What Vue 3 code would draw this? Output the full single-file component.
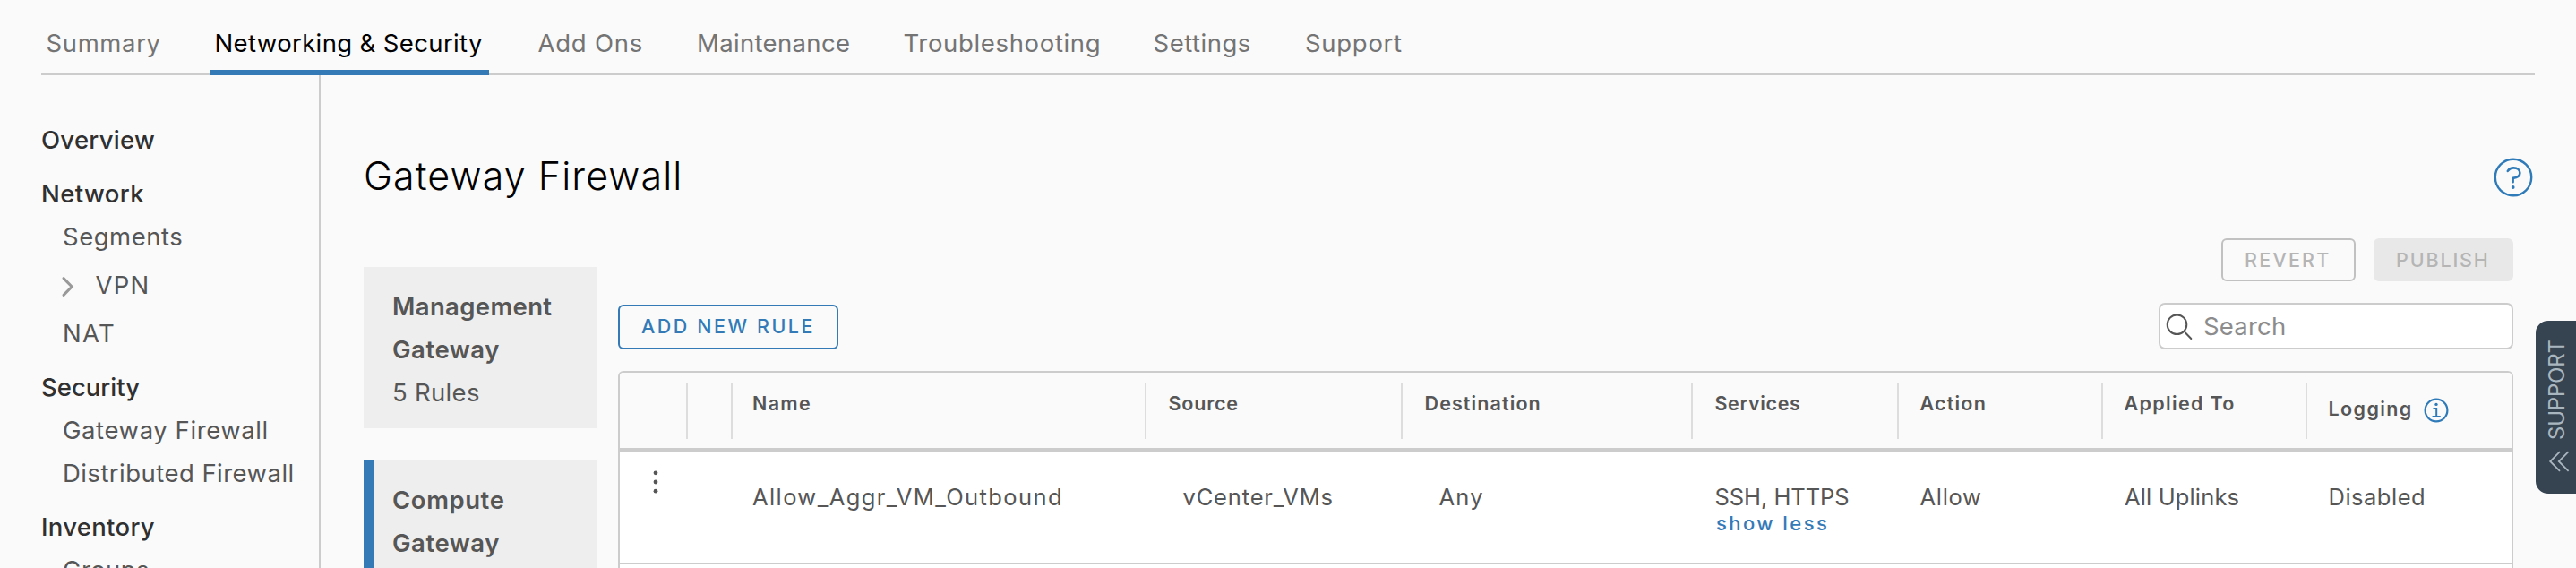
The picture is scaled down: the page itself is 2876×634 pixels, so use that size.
<script setup>
const tabs = [
  { label: 'Summary', track: 0.62 },
  { label: 'Networking & Security', track: 0.37, active: true },
  { label: 'Add Ons', track: 0.78 },
  { label: 'Maintenance', track: 0.34 },
  { label: 'Troubleshooting', track: 0.66 },
  { label: 'Settings', track: 0.5 },
  { label: 'Support', track: 0.7 },
]

const nav = [
  { label: 'Overview', track: 0.28, head: true },
  { label: 'Network', track: 0.42, head: true },
  { label: 'Segments', track: 0.5 },
  { label: 'VPN', track: 1.2, expandable: true },
  { label: 'NAT', track: 1.3 },
  { label: 'Security', track: 0, head: true },
  { label: 'Gateway Firewall', track: 0.58 },
  { label: 'Distributed Firewall', track: 0.46 },
  { label: 'Inventory', track: 0.3, head: true },
  { label: 'Groups', track: 0.4 },
]

const gateways = [
  {
    lines: [
      { text: 'Management', track: 0.36 },
      { text: 'Gateway', track: 0.52 },
    ],
    rules: '5 Rules',
  },
  {
    lines: [
      { text: 'Compute', track: 0.57 },
      { text: 'Gateway', track: 0.52 },
    ],
    active: true,
  },
]

const columns = [
  { key: 'menu' },
  { key: 'select' },
  { key: 'name', label: 'Name', track: 1.35 },
  { key: 'source', label: 'Source', track: 0.8 },
  { key: 'destination', label: 'Destination', track: 1.1 },
  { key: 'services', label: 'Services', track: 0.64 },
  { key: 'action', label: 'Action', track: 1.2 },
  { key: 'applied', label: 'Applied To', track: 1.33 },
  { key: 'logging', label: 'Logging', track: 1.4 },
]

const rule = {
  name: { text: 'Allow_Aggr_VM_Outbound', track: 1.4 },
  source: { text: 'vCenter_VMs', track: 0.83 },
  destination: { text: 'Any', track: 1.2 },
  services: { text: 'SSH, HTTPS', track: -0.06 },
  action: { text: 'Allow', track: 0.7 },
  applied: { text: 'All Uplinks', track: 0.14 },
  logging: { text: 'Disabled', track: 0.5 },
}

const tracking = (v) => ({ letterSpacing: `${v || 0}px` })
</script>

<template>
  <div class="page">
    <nav class="tabs">
      <a
        v-for="t in tabs"
        :key="t.label"
        class="tab"
        :class="{ active: t.active }"
        :style="tracking(t.track)"
      >{{ t.label }}</a>
    </nav>

    <div class="body">
      <aside class="sidebar">
        <div
          v-for="n in nav"
          :key="n.label"
          class="nav-item"
          :class="{ head: n.head, expandable: n.expandable }"
        >
          <svg v-if="n.expandable" class="caret" width="16" height="26" viewBox="0 0 16 26">
            <path d="M4 3.6 L13.2 13 L4 22.4" fill="none" stroke="#999" stroke-width="3" stroke-linecap="round" />
          </svg>
          <span :style="tracking(n.track)">{{ n.label }}</span>
        </div>
      </aside>

      <main class="main">
        <header class="title-row">
          <h1>Gateway Firewall</h1>
          <svg class="help" width="44" height="44" viewBox="0 0 44 44" fill="none" stroke="#2f7ab8">
            <circle cx="22" cy="22" r="20.2" stroke-width="2.4" />
            <path d="M15.8 14.9 C17.4 12.4 19.6 11.4 22.3 11.4 C26.4 11.4 29.4 13.6 29.4 17 C29.4 20.8 26.4 22.2 21.6 22.9 V27.2" stroke-width="2.6" stroke-linecap="round" stroke-linejoin="round" />
            <circle cx="21.7" cy="33" r="1.9" fill="#2f7ab8" stroke="none" />
          </svg>
        </header>

        <div class="workspace">
          <section class="gateways">
            <div v-for="(g, i) in gateways" :key="i" class="gateway" :class="{ active: g.active }">
              <strong v-for="l in g.lines" :key="l.text" :style="tracking(l.track)">{{ l.text }}</strong>
              <span v-if="g.rules">{{ g.rules }}</span>
            </div>
          </section>

          <section class="panel">
            <div class="actions">
              <button class="btn revert">REVERT</button>
              <button class="btn publish">PUBLISH</button>
            </div>

            <div class="toolbar">
              <button class="btn add">ADD NEW RULE</button>
              <div class="search">
                <svg width="32" height="32" viewBox="0 0 32 32" fill="none" stroke="#565656" stroke-width="2">
                  <circle cx="12.5" cy="12.3" r="10.8" />
                  <path d="M22 21.5 L28.3 28" stroke-linecap="round" />
                </svg>
                <span>Search</span>
              </div>
            </div>

            <div class="table">
              <div class="row head-row">
                <div v-for="c in columns" :key="c.key" class="th" :class="c.key">
                  <span v-if="c.label" :style="tracking(c.track)">{{ c.label }}</span>
                  <svg v-if="c.key === 'logging'" class="info" width="28" height="30" viewBox="0 0 28 30" fill="none" stroke="#2f7ab8">
                    <circle cx="14" cy="15" r="12.4" stroke-width="2.2" />
                    <circle cx="14" cy="8.4" r="1.7" fill="#2f7ab8" stroke="none" />
                    <path d="M11.2 13 H14.2 V21.8 M10.3 21.9 H18" stroke-width="2" stroke-linecap="round" />
                  </svg>
                </div>
              </div>
              <div class="row data-row">
                <div v-for="c in columns" :key="c.key" class="td" :class="c.key">
                  <svg v-if="c.key === 'menu'" class="dots" width="8" height="28" viewBox="0 0 8 28" fill="#565656">
                    <circle cx="4" cy="3.8" r="2.4" />
                    <circle cx="4" cy="14" r="2.4" />
                    <circle cx="4" cy="24.2" r="2.4" />
                  </svg>
                  <span v-else-if="rule[c.key]" :style="tracking(rule[c.key].track)">{{ rule[c.key].text }}</span>
                  <a v-if="c.key === 'services'" class="less">show less</a>
                </div>
              </div>
            </div>
          </section>
        </div>
      </main>
    </div>

    <div class="support">
      <span>SUPPORT</span>
      <svg width="26" height="26" viewBox="0 0 26 26" fill="none" stroke="#a9b6bf" stroke-width="1.8">
        <path d="M14 2.2 L3.2 13 L14 23.8 M23.6 2.2 L12.8 13 L23.6 23.8" />
      </svg>
    </div>
  </div>
</template>

<style>
body {
  margin: 0;
  background: #fafafa;
}
</style>

<style scoped>
.page {
  position: relative;
  width: 2876px;
  height: 634px;
  overflow: hidden;
  background: #fafafa;
  color: #565656;
  font-family: Inter, "Open Sans", sans-serif;
  font-size: 27.5px;
  font-kerning: normal;
  display: flex;
  flex-direction: column;
}

.tabs {
  box-sizing: border-box;
  flex: none;
  height: 84px;
  margin: 0 46px;
  border-bottom: 2px solid #ccc;
  display: grid;
  grid-template-columns: 188px 361px 177.5px 230.5px 279px 169.5px auto;
}
.tab {
  box-sizing: border-box;
  justify-self: start;
  height: 84px;
  padding: 24px 5px 0 5.5px;
  line-height: 48px;
  white-space: nowrap;
  color: #747474;
}
.tab.active {
  width: 312px;
  color: #000;
  border-bottom: 6px solid #337ab7;
}

.body {
  flex: 1;
  min-height: 0;
  display: flex;
}

.sidebar {
  box-sizing: border-box;
  flex: none;
  width: 358px;
  padding: 36px 0 0 46px;
  border-right: 2px solid #ccc;
}
.nav-item {
  display: flex;
  align-items: center;
  height: 48px;
  padding-left: 24px;
  white-space: nowrap;
}
.nav-item.head {
  margin-top: 12px;
  padding-left: 0;
  font-weight: 500;
  color: #303030;
}
.nav-item.expandable {
  height: 60px;
  padding-left: 21px;
  gap: 23.5px;
}
.caret {
  flex: none;
  position: relative;
  top: 2px;
}

.main {
  flex: 1;
  min-width: 0;
  padding: 82px 48px 0;
}
.title-row {
  display: flex;
  justify-content: space-between;
  height: 100px;
}
h1 {
  margin: 0;
  font-size: 43px;
  font-weight: 300;
  line-height: 60px;
  letter-spacing: 1.08px;
  color: #000;
}
.help {
  margin-top: 10px;
}

.workspace {
  display: flex;
  gap: 24px;
  padding-right: 22px;
}
.gateways {
  flex: none;
  width: 260px;
  padding-top: 32px;
  display: flex;
  flex-direction: column;
  gap: 36px;
}
.gateway {
  box-sizing: border-box;
  height: 180px;
  padding: 20px 0 0 32px;
  background: #eee;
  line-height: 48px;
  display: flex;
  flex-direction: column;
}
.gateway.active {
  padding-left: 20px;
  border-left: 12px solid #337ab7;
}
.gateway strong {
  font-weight: 600;
}
.gateway span {
  letter-spacing: 0.3px;
}

.panel {
  flex: 1;
  min-width: 0;
}
.actions {
  display: flex;
  justify-content: flex-end;
  gap: 20px;
  height: 48px;
}
.btn {
  box-sizing: border-box;
  display: block;
  margin: 0;
  border: 2px solid transparent;
  border-radius: 6px;
  background: transparent;
  font: 500 21.5px/44px Inter, "Open Sans", sans-serif;
  text-align: left;
  white-space: nowrap;
}
.revert {
  width: 150px;
  height: 48px;
  padding: 0 0 0 24px;
  border-color: #c1c1c1;
  color: #b5b5b5;
  letter-spacing: 2.25px;
}
.publish {
  width: 156px;
  height: 48px;
  padding: 0 0 0 23px;
  border-color: #e8e8e8;
  background: #e8e8e8;
  color: #b5b5b5;
  letter-spacing: 1.85px;
}
.toolbar {
  display: flex;
  justify-content: space-between;
  align-items: flex-end;
  height: 52px;
  margin-top: 24px;
}
.add {
  width: 246px;
  height: 50px;
  padding: 0 0 2px 24px;
  border-color: #337ab7;
  color: #337ab7;
  letter-spacing: 2.55px;
}
.search {
  box-sizing: border-box;
  width: 396px;
  height: 52px;
  padding-left: 6px;
  border: 2px solid #ccc;
  border-radius: 7px;
  background: #fff;
  color: #8c8c8c;
  line-height: 48px;
  display: flex;
  align-items: center;
  gap: 10px;
  letter-spacing: 0.2px;
}
.search svg {
  position: relative;
  top: 2px;
}

.table {
  box-sizing: border-box;
  height: 400px;
  margin-top: 24px;
  border: 2px solid #ccc;
  border-radius: 6px;
  background: #fff;
  overflow: hidden;
}
.row {
  display: grid;
  grid-template-columns: 76px 50px 462px 286px 324px 230px 228px 228px 228px;
}
.head-row {
  height: 84px;
  border-bottom: 4px solid #ccc;
  background: #fafafa;
}
.th {
  box-sizing: border-box;
  height: 62px;
  margin-top: 12px;
  padding-left: 24.5px;
  border-right: 2px solid #ddd;
  font-size: 21.5px;
  font-weight: 600;
  line-height: 44px;
  display: flex;
  white-space: nowrap;
}
.th.name,
.td.name {
  padding-left: 22px;
}
.th.action,
.th.applied,
.th.logging {
  padding-left: 23.5px;
}
.th.logging {
  border-right: 0;
  line-height: 56px;
}
.info {
  margin: 15px 0 0 12.5px;
}
.data-row {
  height: 124px;
  border-bottom: 2px solid #ccc;
}
.td {
  padding: 36px 0 0 24px;
  font-size: 25.5px;
  line-height: 30px;
  display: flex;
  flex-direction: column;
  white-space: nowrap;
}
.td.menu {
  padding: 20px 0 0 36px;
}
.td.source,
.td.destination {
  padding-left: 40.5px;
}
.td.services {
  padding-left: 24.5px;
}
.td.action,
.td.logging {
  padding-left: 23.5px;
}
.less {
  padding-left: 1.5px;
  font-size: 22px;
  font-weight: 500;
  line-height: 28px;
  letter-spacing: 2.45px;
  color: #337ab7;
}

.support {
  position: absolute;
  box-sizing: border-box;
  top: 358px;
  right: 0;
  width: 45.5px;
  height: 193px;
  padding-top: 21px;
  border-radius: 14px 0 0 14px;
  background: #364350;
  color: #a9b6bf;
  display: flex;
  flex-direction: column;
  align-items: flex-start;
}
.support span {
  height: 112px;
  margin-left: 1.5px;
  writing-mode: vertical-rl;
  transform: rotate(180deg);
  font-size: 24px;
  line-height: 46px;
  letter-spacing: -0.2px;
}
.support svg {
  margin: 10.5px 0 0 13px;
}
</style>
